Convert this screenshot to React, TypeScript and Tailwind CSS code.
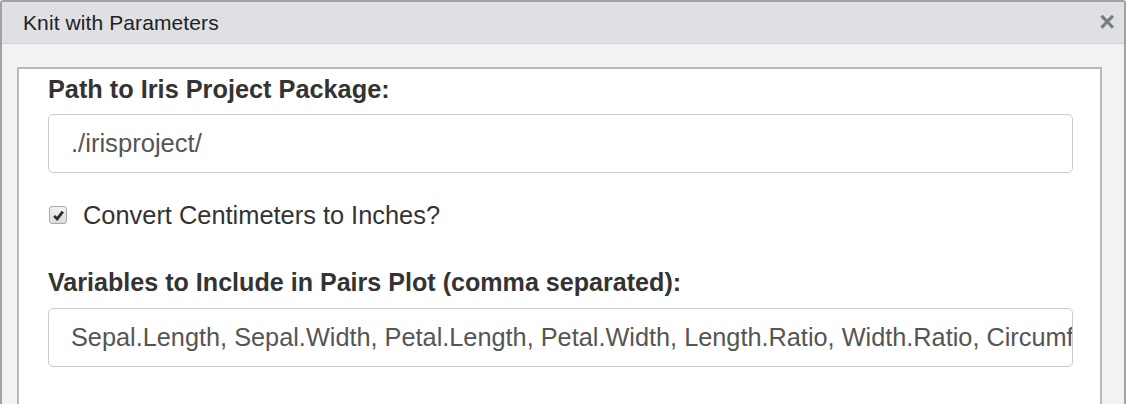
export default function App() {
  return (
    <div
      className="w-[1126px] h-[404px] overflow-hidden bg-white"
      style={{ fontFamily: '"Liberation Sans", Arial, sans-serif' }}
    >
      <div className="h-[420px] flex flex-col border-2 border-[#a2a2a2] rounded-tl-[3px] rounded-tr-[3px] bg-[#f1f3f2]">
        <div className="h-[42px] shrink-0 flex items-center justify-between pl-[21px] pr-[9px] bg-[#dfe0e3] border-b border-[#d2d3d6]">
          <span className="text-[21px] text-[#222] tracking-[0.1px]">Knit with Parameters</span>
          <span className="text-[27px] font-bold text-[#7a7a7a] leading-none -mt-[1px]">×</span>
        </div>
        <div className="flex-1 pl-[15px] pr-[22px] pt-[23px]">
          <div className="h-full bg-white border-2 border-[#b8b8b8] pl-[29px] pr-[27px] pt-[6px]">
            <label className="block text-[25.3px] font-bold text-[#333] leading-[28px]">
              Path to Iris Project Package:
            </label>
            <div className="mt-[11px] h-[59px] flex items-center border border-[#cccccc] rounded-[5px] pl-[22px] text-[25.6px] text-[#555] overflow-hidden whitespace-nowrap">
              ./irisproject/
            </div>
            <div className="mt-[29px] h-[26px] flex items-center gap-[16px]">
              <span className="w-[18px] h-[18px] flex items-center justify-center border border-[#a9a9a9] rounded-[3px] bg-gradient-to-b from-[#f2f2f2] to-[#dcdcdc] ml-[1px]">
                <svg width="13" height="13" viewBox="0 0 12 12">
                  <path d="M2 6.5 L4.8 9.2 L10 2.5" stroke="#2e2e2e" strokeWidth="2.6" fill="none" />
                </svg>
              </span>
              <span className="text-[25.4px] text-[#333] leading-[26px]">Convert Centimeters to Inches?</span>
            </div>
            <label className="block mt-[40px] text-[25.1px] font-bold text-[#333] leading-[28px]">
              Variables to Include in Pairs Plot (comma separated):
            </label>
            <div className="mt-[12px] h-[59px] flex items-center border border-[#cccccc] rounded-[5px] pl-[22px] pr-[3px] text-[25.3px] text-[#555] overflow-hidden whitespace-nowrap">
              Sepal.Length, Sepal.Width, Petal.Length, Petal.Width, Length.Ratio, Width.Ratio, Circumference
            </div>
          </div>
        </div>
      </div>
    </div>
  );
}
